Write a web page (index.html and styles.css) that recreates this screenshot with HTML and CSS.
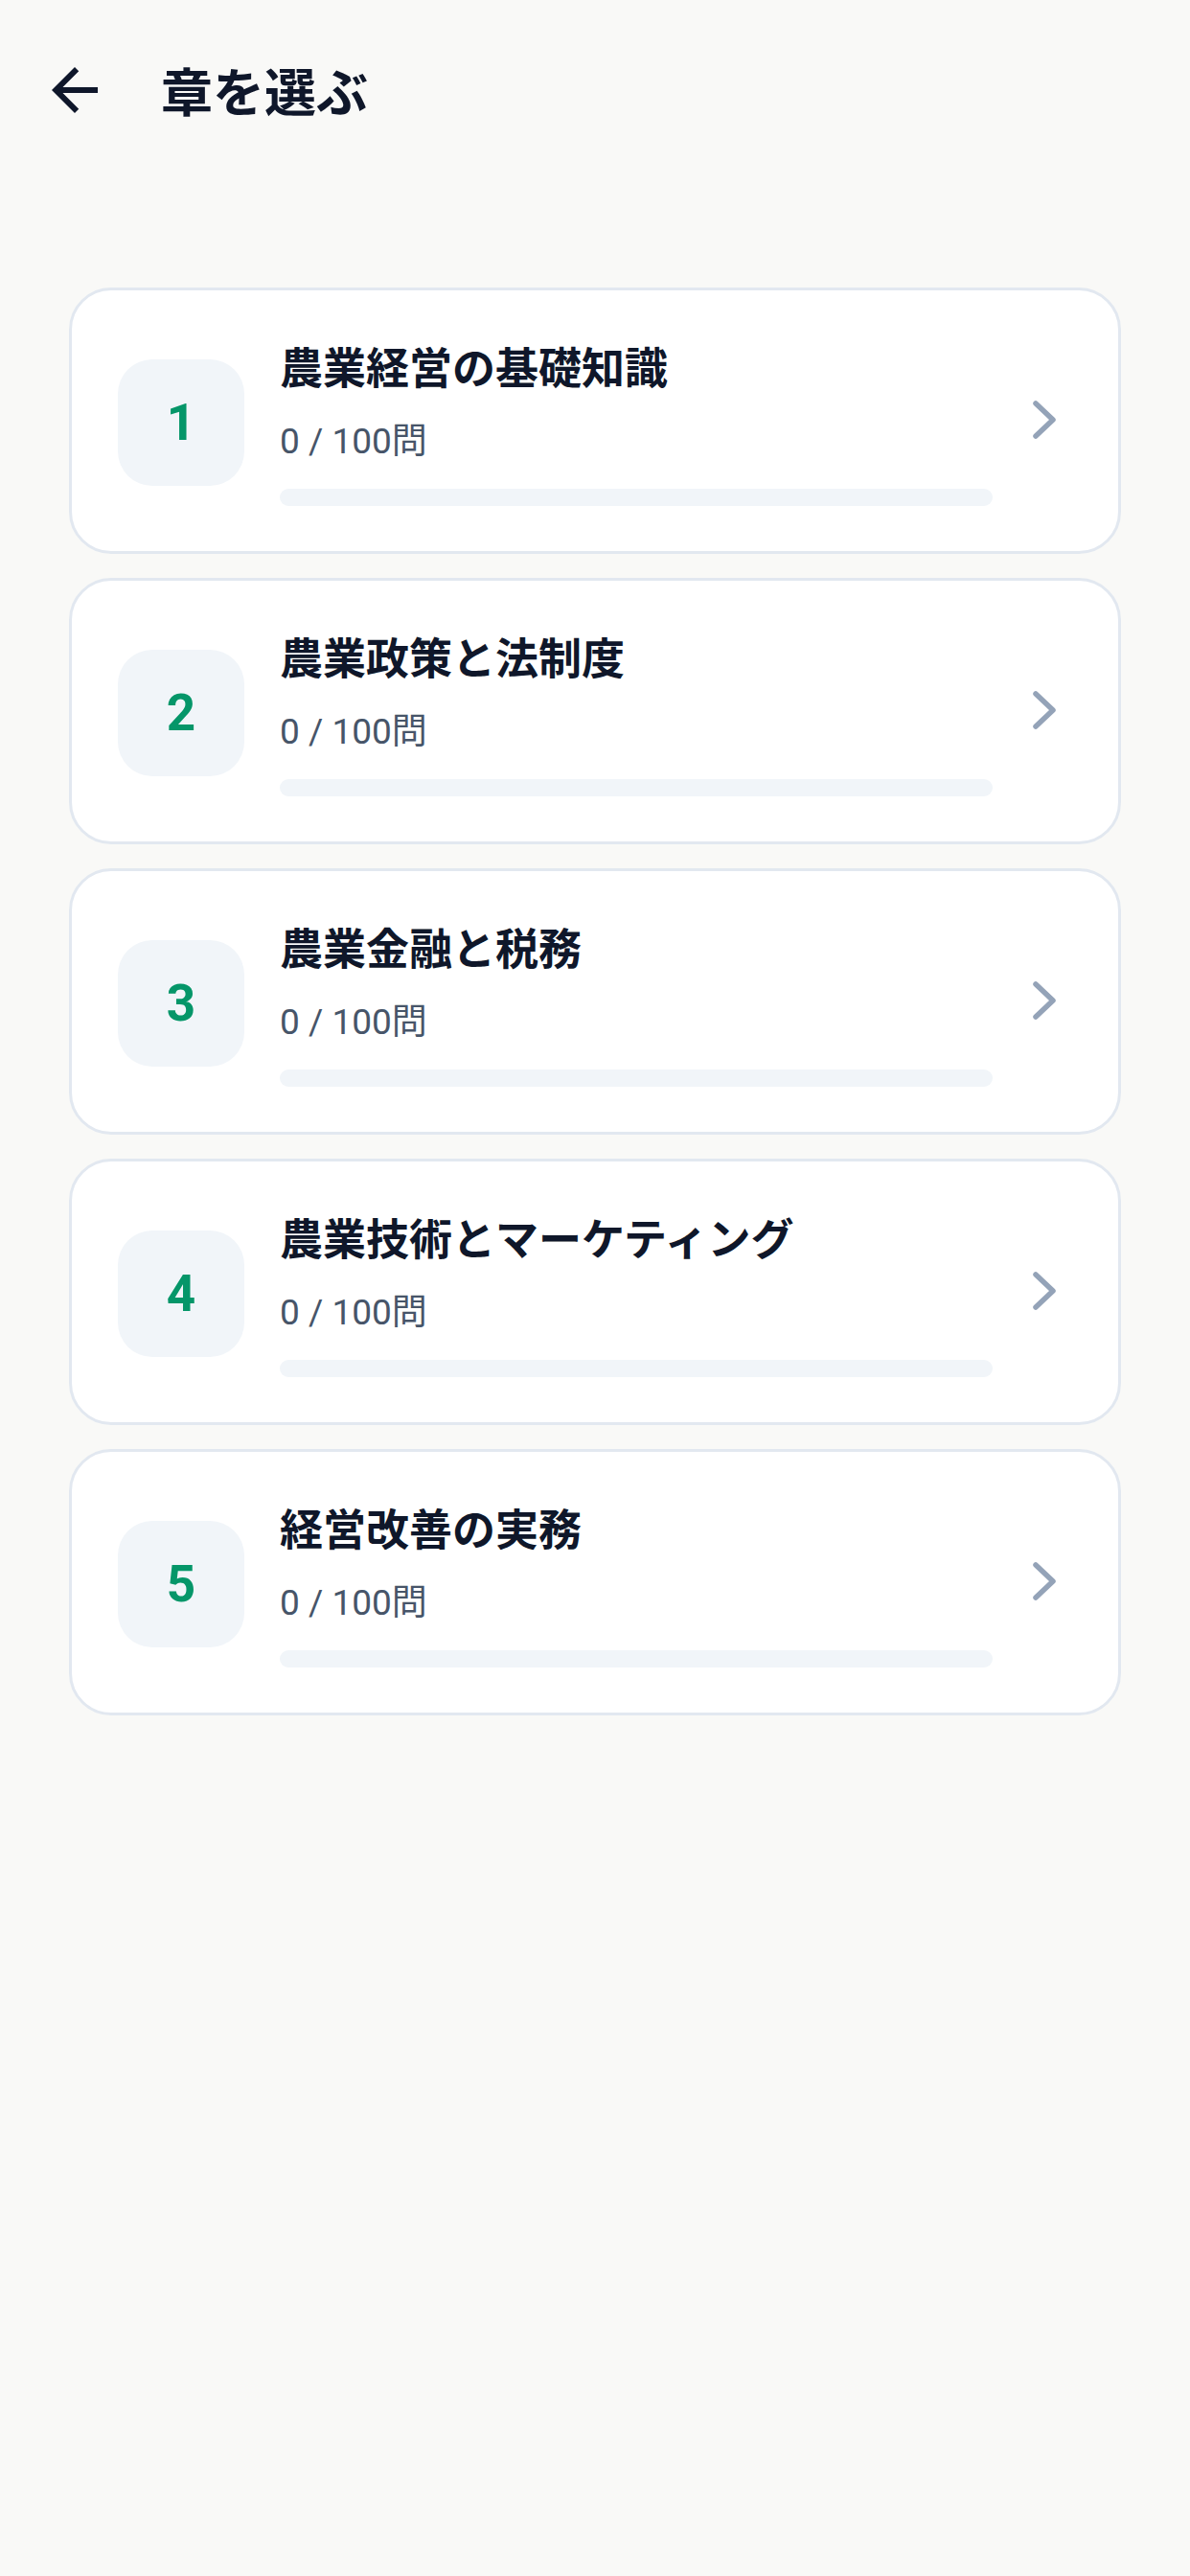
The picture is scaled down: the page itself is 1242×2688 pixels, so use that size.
FILE: index.html
```html
<!DOCTYPE html>
<html lang="ja">
<head>
<meta charset="utf-8">
<title>章を選ぶ</title>
<link rel="stylesheet" href="styles.css">
</head>
<body>
<header class="topbar">
  <svg class="back" viewBox="0 0 24 24" width="72" height="72" aria-hidden="true">
    <path d="M20 11H7.83l5.59-5.59L12 4l-8 8 8 8 1.41-1.41L7.83 13H20v-2z" fill="#0f172a"/>
  </svg>
  <h1 class="page-title">章を選ぶ</h1>
</header>
<main class="chapters">
  <div class="card">
    <div class="num">1</div>
    <div class="info">
      <div class="name">農業経営の基礎知識</div>
      <div class="count">0 / 100問</div>
      <div class="bar"><div class="fill" style="width:0%"></div></div>
    </div>
    <svg class="chev" viewBox="0 0 30 44" width="30" height="44" aria-hidden="true"><polyline points="5,5 23,22 5,39" fill="none" stroke="#94a3b8" stroke-width="5.5" stroke-linecap="round" stroke-linejoin="round"/></svg>
  </div>
  <div class="card">
    <div class="num">2</div>
    <div class="info">
      <div class="name">農業政策と法制度</div>
      <div class="count">0 / 100問</div>
      <div class="bar"><div class="fill" style="width:0%"></div></div>
    </div>
    <svg class="chev" viewBox="0 0 30 44" width="30" height="44" aria-hidden="true"><polyline points="5,5 23,22 5,39" fill="none" stroke="#94a3b8" stroke-width="5.5" stroke-linecap="round" stroke-linejoin="round"/></svg>
  </div>
  <div class="card">
    <div class="num">3</div>
    <div class="info">
      <div class="name">農業金融と税務</div>
      <div class="count">0 / 100問</div>
      <div class="bar"><div class="fill" style="width:0%"></div></div>
    </div>
    <svg class="chev" viewBox="0 0 30 44" width="30" height="44" aria-hidden="true"><polyline points="5,5 23,22 5,39" fill="none" stroke="#94a3b8" stroke-width="5.5" stroke-linecap="round" stroke-linejoin="round"/></svg>
  </div>
  <div class="card">
    <div class="num">4</div>
    <div class="info">
      <div class="name">農業技術とマーケティング</div>
      <div class="count">0 / 100問</div>
      <div class="bar"><div class="fill" style="width:0%"></div></div>
    </div>
    <svg class="chev" viewBox="0 0 30 44" width="30" height="44" aria-hidden="true"><polyline points="5,5 23,22 5,39" fill="none" stroke="#94a3b8" stroke-width="5.5" stroke-linecap="round" stroke-linejoin="round"/></svg>
  </div>
  <div class="card">
    <div class="num">5</div>
    <div class="info">
      <div class="name">経営改善の実務</div>
      <div class="count">0 / 100問</div>
      <div class="bar"><div class="fill" style="width:0%"></div></div>
    </div>
    <svg class="chev" viewBox="0 0 30 44" width="30" height="44" aria-hidden="true"><polyline points="5,5 23,22 5,39" fill="none" stroke="#94a3b8" stroke-width="5.5" stroke-linecap="round" stroke-linejoin="round"/></svg>
  </div>
</main>
</body>
</html>
```
FILE: styles.css
```css
html, body {
  margin: 0;
  padding: 0;
  background: #f9f9f7;
}
body {
  width: 1242px;
  min-height: 2688px;
  font-family: Roboto, "Noto Sans CJK JP", sans-serif;
  color: #0f172a;
}
.topbar {
  height: 188px;
  display: flex;
  align-items: center;
  padding-left: 42px;
  box-sizing: border-box;
}
.back {
  display: block;
  flex: none;
}
.page-title {
  margin: 0 0 0 54px;
  font-family: "Noto Sans CJK JP", sans-serif;
  font-size: 54px;
  font-weight: 700;
  line-height: 1.2;
  color: #0f172a;
}
.chapters {
  margin-top: 112px;
  padding: 0 72px;
  display: flex;
  flex-direction: column;
  gap: 25px;
}
.card {
  display: flex;
  align-items: center;
  background: #ffffff;
  border: 3px solid #e2e8f0;
  border-radius: 44px;
  padding: 51px 61px 47px 48px;
}
.num {
  flex: none;
  width: 132px;
  height: 132px;
  border-radius: 36px;
  background: #f1f5f9;
  display: flex;
  align-items: center;
  justify-content: center;
  font-family: Roboto, sans-serif;
  font-weight: 700;
  font-size: 53px;
  color: #059669;
}
.info {
  flex: 1;
  margin-left: 37px;
  margin-right: 40px;
  display: flex;
  flex-direction: column;
}
.name {
  font-family: "Noto Sans CJK JP", sans-serif;
  font-size: 45px;
  font-weight: 700;
  line-height: 56px;
  height: 56px;
  color: #0f172a;
  white-space: nowrap;
}
.count {
  margin-top: 27px;
  font-family: Roboto, "Noto Sans CJK JP", sans-serif;
  font-size: 37px;
  line-height: 48px;
  height: 48px;
  color: #475569;
}
.bar {
  margin-top: 25px;
  height: 18px;
  border-radius: 9px;
  background: #f1f5f9;
  overflow: hidden;
}
.fill {
  height: 100%;
  background: #059669;
}
.chev {
  display: block;
  flex: none;
  margin-bottom: 6px;
}
```
